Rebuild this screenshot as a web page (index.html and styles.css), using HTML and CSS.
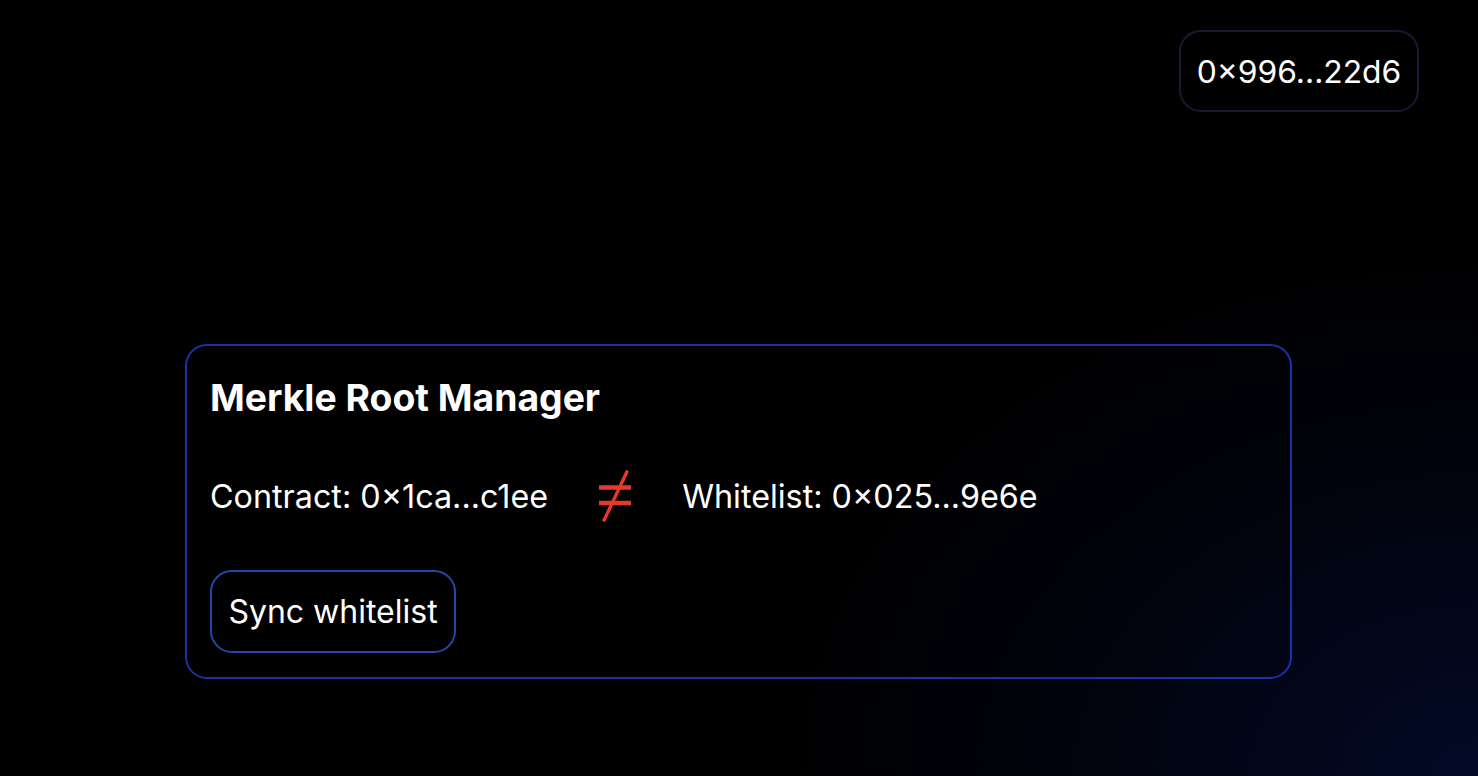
FILE: index.html
```html
<!DOCTYPE html>
<html>
<head>
<meta charset="utf-8">
<link rel="stylesheet" href="styles.css">
</head>
<body>
<header class="topbar">
  <button class="account">0×996...22d6</button>
</header>
<main class="main">
  <section class="card">
    <h1 class="title">Merkle Root Manager</h1>
    <div class="roots">
      <span class="root">Contract: 0×1ca...c1ee</span>
      <svg class="neq" width="34" height="52" viewBox="0 0 34 52" role="img" aria-label="not equal">
        <line x1="1" y1="17.5" x2="33" y2="17.5" stroke="#e8382a" stroke-width="4.5"/>
        <line x1="1" y1="33" x2="33" y2="33" stroke="#e8382a" stroke-width="4.5"/>
        <line x1="29.5" y1="0.5" x2="5.5" y2="51.5" stroke="#e8382a" stroke-width="3.4"/>
      </svg>
      <span class="root">Whitelist: 0×025...9e6e</span>
    </div>
    <button class="sync">Sync whitelist</button>
  </section>
</main>
</body>
</html>
```
FILE: styles.css
```css
html, body {
  margin: 0;
  height: 100%;
}
body {
  background: radial-gradient(ellipse 720px 540px at 100% 100%, #030a27 0%, #01030d 55%, #000 100%), #000;
  background-color: #000;
  color: #fff;
  font-family: Inter, "Noto Sans", sans-serif;
  overflow: hidden;
}
.topbar {
  display: flex;
  justify-content: flex-end;
  padding: 30px 59px 0 0;
}
.account {
  height: 82px;
  width: 240px;
  border: 2px solid #151b35;
  border-radius: 22px;
  background: #000;
  color: #fff;
  font-family: inherit;
  font-size: 31.8px;
  padding: 0;
}
.main {
  display: flex;
  justify-content: flex-start;
  padding-left: 185px;
  margin-top: 232px;
}
.card {
  width: 1107px;
  height: 335px;
  box-sizing: border-box;
  border: 2px solid #1c31a6;
  border-radius: 22px;
  padding: 29px 23px;
}
.title {
  margin: 0;
  font-size: 37.3px;
  font-weight: 700;
  line-height: normal;
}
.roots {
  display: flex;
  align-items: center;
  gap: 50px;
  margin-top: 50px;
  font-size: 32.3px;
}
.neq {
  display: block;
  flex: none;
}
.sync {
  display: block;
  margin-top: 48px;
  height: 83px;
  width: 246px;
  border: 2px solid #2547a8;
  border-radius: 22px;
  background: #000;
  color: #fff;
  font-family: inherit;
  font-size: 32px;
  padding: 0;
}
```
